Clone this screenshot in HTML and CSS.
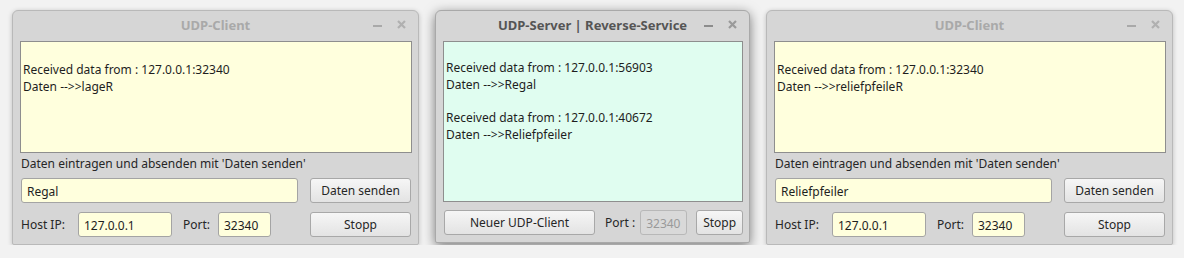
FILE: index.html
```html
<!DOCTYPE html>
<html lang="de">
<head>
  <meta charset="UTF-8">
  <title>UDP Reverse-Service</title>
  <link rel="stylesheet" href="styles.css">
</head>
<body>
  <div class="desktop">

    <div class="window client">
      <div class="titlebar">
        <span class="title">UDP-Client</span>
        <span class="controls">
          <span class="min"></span>
          <svg class="close" width="9" height="9" viewBox="0 0 9 9"><path d="M1 1L8 8M8 1L1 8"/></svg>
        </span>
      </div>
      <div class="content">
        <div class="log client-log">
          <div class="line">&nbsp;</div>
          <div class="line">Received data from : 127.0.0.1:32340</div>
          <div class="line">Daten --&gt;&gt;lageR</div>
        </div>
        <div class="hint">Daten eintragen und absenden mit 'Daten senden'</div>
        <div class="row">
          <input class="field data" type="text" value="Regal">
          <button class="btn wide">Daten senden</button>
        </div>
        <div class="row">
          <label class="lbl">Host IP:</label>
          <input class="field ip" type="text" value="127.0.0.1">
          <label class="lbl port-lbl">Port:</label>
          <input class="field port" type="text" value="32340">
          <button class="btn wide push">Stopp</button>
        </div>
      </div>
    </div>

    <div class="window server active">
      <div class="titlebar">
        <span class="title">UDP-Server | Reverse-Service</span>
        <span class="controls">
          <span class="min"></span>
          <svg class="close" width="9" height="9" viewBox="0 0 9 9"><path d="M1 1L8 8M8 1L1 8"/></svg>
        </span>
      </div>
      <div class="content">
        <div class="log server-log">
          <div class="line">&nbsp;</div>
          <div class="line">Received data from : 127.0.0.1:56903</div>
          <div class="line">Daten --&gt;&gt;Regal</div>
          <div class="line">&nbsp;</div>
          <div class="line">Received data from : 127.0.0.1:40672</div>
          <div class="line">Daten --&gt;&gt;Reliefpfeiler</div>
        </div>
        <div class="row">
          <button class="btn new-client">Neuer UDP-Client</button>
          <label class="lbl srv-port-lbl">Port :</label>
          <input class="field srv-port" type="text" value="32340" disabled>
          <button class="btn small">Stopp</button>
        </div>
      </div>
    </div>

    <div class="window client">
      <div class="titlebar">
        <span class="title">UDP-Client</span>
        <span class="controls">
          <span class="min"></span>
          <svg class="close" width="9" height="9" viewBox="0 0 9 9"><path d="M1 1L8 8M8 1L1 8"/></svg>
        </span>
      </div>
      <div class="content">
        <div class="log client-log">
          <div class="line">&nbsp;</div>
          <div class="line">Received data from : 127.0.0.1:32340</div>
          <div class="line">Daten --&gt;&gt;reliefpfeileR</div>
        </div>
        <div class="hint">Daten eintragen und absenden mit 'Daten senden'</div>
        <div class="row">
          <input class="field data" type="text" value="Reliefpfeiler">
          <button class="btn wide">Daten senden</button>
        </div>
        <div class="row">
          <label class="lbl">Host IP:</label>
          <input class="field ip" type="text" value="127.0.0.1">
          <label class="lbl port-lbl">Port:</label>
          <input class="field port" type="text" value="32340">
          <button class="btn wide push">Stopp</button>
        </div>
      </div>
    </div>

  </div>
</body>
</html>
```

FILE: styles.css
```css
body {
    margin: 0;
    padding: 0;
    background: #f2f2f2;
    font-family: 'Noto Sans', sans-serif;
    font-size: 12px;
    color: #262626;
}
.desktop {
    display: flex;
    align-items: flex-start;
    gap: 16px;
    padding: 10px 0 0 12px;
}
.window {
    box-sizing: border-box;
    background: #d6d6d6;
    border: 1px solid #b9b9b9;
    border-radius: 6px 6px 2px 2px;
    box-shadow: 0 1px 5px rgba(0, 0, 0, 0.22);
}
.window.client {
    width: 407px;
    height: 235px;
}
.window.server {
    width: 315px;
    height: 233px;
}
.window.active {
    border-color: #a9a9a9;
    box-shadow: 0 3px 12px rgba(0, 0, 0, 0.5);
}
.titlebar {
    position: relative;
    box-sizing: border-box;
    height: 30px;
    padding-bottom: 3px;
    display: flex;
    align-items: center;
    justify-content: center;
}
.title {
    font-weight: bold;
    font-size: 13px;
    color: #a9a9a9;
}
.active .title {
    color: #555;
}
.controls {
    position: absolute;
    right: 12px;
    top: 8px;
    display: flex;
    align-items: center;
    gap: 15px;
    height: 10px;
}
.min {
    display: block;
    width: 9px;
    height: 2px;
    margin-top: 3px;
    background: #a9a9a9;
}
.close path {
    stroke: #b0b0b0;
    stroke-width: 2.2;
    fill: none;
}
.active .min {
    background: #8c8c8c;
}
.active .close path {
    stroke: #9a9a9a;
}
.content {
    padding: 0 6px 0 7px;
}
.log {
    box-sizing: border-box;
    border: 1px solid #8e8e8e;
    padding: 1px 2px;
    line-height: 17.5px;
    color: #1e1e1e;
}
.client-log {
    height: 112px;
    background: #ffffdd;
}
.server-log {
    height: 161px;
    background: #e0fdf0;
    line-height: 16.8px;
}
.hint {
    height: 18px;
    line-height: 18px;
    margin-top: 2px;
    padding-left: 1px;
}
.row {
    display: flex;
    align-items: center;
    height: 25px;
    margin-top: 5px;
    white-space: nowrap;
}
.row + .row {
    margin-top: 9px;
}
.server-log + .row {
    margin-top: 8px;
}
.field {
    box-sizing: border-box;
    flex-shrink: 0;
    height: 25px;
    border: 1px solid #a4a4a4;
    border-radius: 3px;
    background: #ffffdd;
    font-family: 'Noto Sans', sans-serif;
    font-size: 12px;
    color: #1e1e1e;
    padding: 2px 4px 0 5px;
    outline: none;
    margin: 0;
}
.field.data {
    width: 277px;
    margin-left: 1px;
}
.field.ip {
    width: 94px;
    margin-left: 13px;
}
.field.port {
    width: 53px;
    margin-left: 8px;
}
.lbl {
    padding-left: 1px;
    flex-shrink: 0;
}
.port-lbl {
    margin-left: 10px;
}
.btn {
    box-sizing: border-box;
    flex-shrink: 0;
    height: 25px;
    border: 1px solid #a8a8a8;
    border-radius: 3px;
    background: linear-gradient(#f6f6f6, #e3e3e3);
    font-family: 'Noto Sans', sans-serif;
    font-size: 12px;
    color: #262626;
    padding: 0;
    margin: 0;
}
.btn.wide {
    width: 101px;
    margin-left: auto;
    margin-right: 1px;
}
.btn.new-client {
    width: 151px;
    margin-left: 1px;
}
.srv-port-lbl {
    margin-left: 9px;
}
.field.srv-port {
    width: 47px;
    margin-left: 5px;
    background: #d9d9d9;
    border-color: #b8b8b8;
    color: #9a9a9a;
}
.btn.small {
    width: 47px;
    margin-left: 9px;
}
```
